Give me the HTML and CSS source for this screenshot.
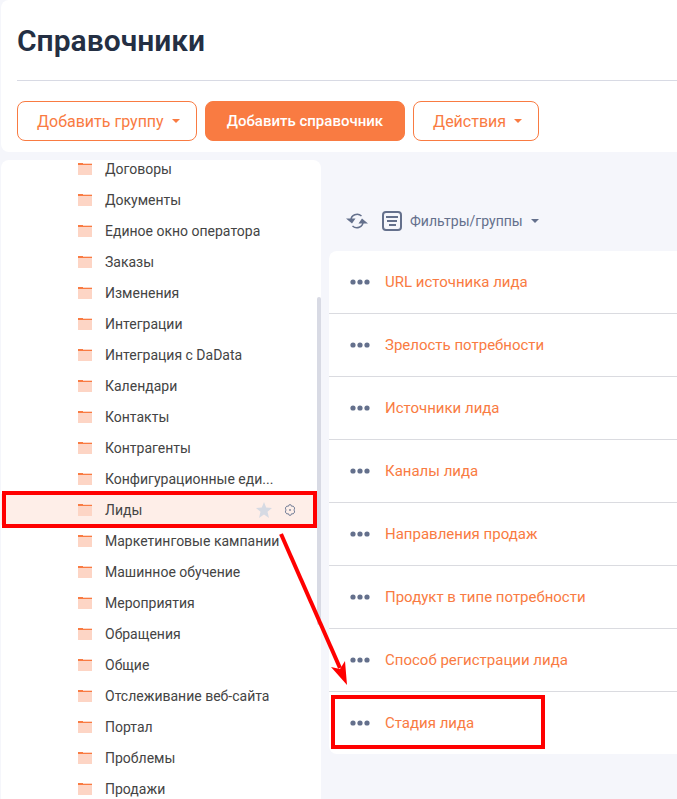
FILE: index.html
```html
<!DOCTYPE html>
<html lang="ru">
<head>
    <meta charset="UTF-8">
    <meta name="viewport" content="width=device-width, initial-scale=1.0">
    <title>Справочники</title>
    <link rel="stylesheet" href="styles.css">
</head>
<body>
    <!-- Shared icons -->
    <svg class="sprite" aria-hidden="true">
        <symbol id="folder" viewBox="0 0 14 12">
            <path fill="#fdd5c5" d="M0 0h14v12H0z"/>
            <path fill="#f97b42" d="M0 0h5v1h9v1H0z"/>
        </symbol>
        <symbol id="dots" viewBox="0 0 20 6">
            <circle cx="3" cy="3" r="2.6"/><circle cx="10" cy="3" r="2.6"/><circle cx="17" cy="3" r="2.6"/>
        </symbol>
        <symbol id="caret" viewBox="0 0 8 4">
            <path d="M0 0h8L4 4z"/>
        </symbol>
    </svg>

    <div class="page">
        <header class="header">
            <h1>Справочники</h1>
            <div class="actions">
                <button class="btn">Добавить группу <svg class="caret"><use href="#caret"/></svg></button>
                <button class="btn btn-primary">Добавить справочник</button>
                <button class="btn">Действия <svg class="caret"><use href="#caret"/></svg></button>
            </div>
        </header>

        <div class="content">
            <nav class="sidebar">
                <ul class="tree">
                    <li><a href="#"><svg class="folder"><use href="#folder"/></svg><span>Договоры</span></a></li>
                    <li><a href="#"><svg class="folder"><use href="#folder"/></svg><span>Документы</span></a></li>
                    <li><a href="#"><svg class="folder"><use href="#folder"/></svg><span>Единое окно оператора</span></a></li>
                    <li><a href="#"><svg class="folder"><use href="#folder"/></svg><span>Заказы</span></a></li>
                    <li><a href="#"><svg class="folder"><use href="#folder"/></svg><span>Изменения</span></a></li>
                    <li><a href="#"><svg class="folder"><use href="#folder"/></svg><span>Интеграции</span></a></li>
                    <li><a href="#"><svg class="folder"><use href="#folder"/></svg><span>Интеграция с DaData</span></a></li>
                    <li><a href="#"><svg class="folder"><use href="#folder"/></svg><span>Календари</span></a></li>
                    <li><a href="#"><svg class="folder"><use href="#folder"/></svg><span>Контакты</span></a></li>
                    <li><a href="#"><svg class="folder"><use href="#folder"/></svg><span>Контрагенты</span></a></li>
                    <li><a href="#"><svg class="folder"><use href="#folder"/></svg><span>Конфигурационные еди...</span></a></li>
                    <li class="active">
                        <a href="#"><svg class="folder"><use href="#folder"/></svg><span>Лиды</span></a>
                        <button class="icon-btn" aria-label="В избранное">
                            <svg class="star" viewBox="0 0 16 16"><path d="M8 0l2.200 5.600 5.800.4-4.500 3.800 1.500 6.200-5-3.400L3 16l1.500-6.200L0 6l5.800-.4z"/></svg>
                        </button>
                        <button class="icon-btn" aria-label="Настройка">
                            <svg class="gear" viewBox="0 0 12 12"><path d="M5 .8h2l.6 1.500 1.600-.2 1.500 1.900L10 6l.7 2-1.500 1.900-1.600-.2L7 11.200H5l-.6-1.500-1.600.2L1.300 8 2 6l-.7-2 1.500-1.900 1.600.2z"/><circle cx="6" cy="6" r=".6"/></svg>
                        </button>
                        <div class="mark mark-group"></div>
                    </li>
                    <li><a href="#"><svg class="folder"><use href="#folder"/></svg><span>Маркетинговые кампании</span></a></li>
                    <li><a href="#"><svg class="folder"><use href="#folder"/></svg><span>Машинное обучение</span></a></li>
                    <li><a href="#"><svg class="folder"><use href="#folder"/></svg><span>Мероприятия</span></a></li>
                    <li><a href="#"><svg class="folder"><use href="#folder"/></svg><span>Обращения</span></a></li>
                    <li><a href="#"><svg class="folder"><use href="#folder"/></svg><span>Общие</span></a></li>
                    <li><a href="#"><svg class="folder"><use href="#folder"/></svg><span>Отслеживание веб-сайта</span></a></li>
                    <li><a href="#"><svg class="folder"><use href="#folder"/></svg><span>Портал</span></a></li>
                    <li><a href="#"><svg class="folder"><use href="#folder"/></svg><span>Проблемы</span></a></li>
                    <li><a href="#"><svg class="folder"><use href="#folder"/></svg><span>Продажи</span></a></li>
                </ul>
                <div class="scroll-thumb"></div>
            </nav>

            <main class="main">
                <div class="toolbar">
                    <button class="icon-btn" aria-label="Обновить">
                        <svg class="refresh" viewBox="0 0 22 16">
                            <path class="line" d="M5 7c0-5 6.500-7.500 10.500-4M17 9c0 5-6.500 7.500-10.500 4"/>
                            <path d="M0 5.500h9.500L6 10.500zM22 10.500h-9.500L16 5.500z"/>
                        </svg>
                    </button>
                    <button class="filter-btn">
                        <svg class="filter" viewBox="0 0 20 20">
                            <rect x="1" y="1" width="18" height="18" rx="3"/>
                            <path d="M4 6h12M5 10h10M7 14h7"/>
                        </svg>
                        Фильтры/группы
                        <svg class="caret"><use href="#caret"/></svg>
                    </button>
                </div>

                <ul class="records">
                    <li><button class="icon-btn" aria-label="Меню"><svg class="dots"><use href="#dots"/></svg></button><a href="#">URL источника лида</a></li>
                    <li><button class="icon-btn" aria-label="Меню"><svg class="dots"><use href="#dots"/></svg></button><a href="#">Зрелость потребности</a></li>
                    <li><button class="icon-btn" aria-label="Меню"><svg class="dots"><use href="#dots"/></svg></button><a href="#">Источники лида</a></li>
                    <li><button class="icon-btn" aria-label="Меню"><svg class="dots"><use href="#dots"/></svg></button><a href="#">Каналы лида</a></li>
                    <li><button class="icon-btn" aria-label="Меню"><svg class="dots"><use href="#dots"/></svg></button><a href="#">Направления продаж</a></li>
                    <li><button class="icon-btn" aria-label="Меню"><svg class="dots"><use href="#dots"/></svg></button><a href="#">Продукт в типе потребности</a></li>
                    <li><button class="icon-btn" aria-label="Меню"><svg class="dots"><use href="#dots"/></svg></button><a href="#">Способ регистрации лида</a></li>
                    <li><button class="icon-btn" aria-label="Меню"><svg class="dots"><use href="#dots"/></svg></button><a href="#">Стадия лида</a><div class="mark mark-record"></div></li>
                </ul>
            </main>
        </div>

        <!-- Arrow from the group to its record -->
        <svg class="arrow" viewBox="0 0 70 156">
            <path class="line" d="M2 3l59 134"/>
            <path d="M68 154L52 136l9 2 5-8z"/>
        </svg>
    </div>
</body>
</html>
```

FILE: styles.css
```css
* {
    margin: 0;
    padding: 0;
    box-sizing: border-box;
}

body {
    font-family: Roboto, Arial, sans-serif;
    font-size: 14px;
    color: #444;
    background-color: #f5f6fb;
}

ul {
    list-style: none;
}

a {
    color: inherit;
    text-decoration: none;
}

button {
    font: inherit;
    color: inherit;
    background: none;
    border: none;
    cursor: pointer;
}

svg {
    display: block;
    flex-shrink: 0;
}

.sprite {
    position: absolute;
    width: 0;
    height: 0;
}

.page {
    position: relative;
    display: flex;
    flex-direction: column;
    gap: 8px;
    height: 100vh;
    padding-left: 1px;
    overflow: hidden;
}

/* Header */
.header {
    flex-shrink: 0;
    padding: 20px 0 11px 16px;
    background-color: white;
    border-radius: 8px 0 0 8px;
}

h1 {
    padding-bottom: 18px;
    border-bottom: 1px solid #d8dae4;
    font-size: 30px;
    font-weight: 600;
    line-height: 42px;
    color: #242f43;
}

.actions {
    display: flex;
    gap: 8px;
    padding-top: 20px;
}

.btn {
    display: flex;
    align-items: center;
    gap: 8px;
    height: 40px;
    padding: 0 16px 0 19px;
    border: 1px solid #f97b42;
    border-radius: 8px;
    font-size: 16px;
    color: #f97b42;
}

.btn-primary {
    padding: 0 21px;
    background-color: #f97b42;
    font-size: 15px;
    font-weight: 500;
    color: white;
}

.caret {
    width: 8px;
    height: 4px;
    fill: currentColor;
}

/* Groups tree */
.content {
    display: flex;
    flex: 1;
    gap: 8px;
    min-height: 0;
}

.sidebar {
    position: relative;
    flex: 0 0 320px;
    overflow: hidden;
    background-color: white;
    border-radius: 8px 8px 0 0;
}

.tree {
    margin-top: -7px;
}

.tree li {
    position: relative;
    display: flex;
    align-items: center;
    gap: 12px;
    height: 31px;
    padding: 0 25px 0 77px;
}

.tree a {
    display: flex;
    flex: 1;
    align-items: center;
    gap: 13px;
    white-space: nowrap;
}

.tree .active {
    background-color: #feeee8;
}

.folder {
    width: 14px;
    height: 12px;
}

.star {
    width: 16px;
    height: 16px;
    fill: #d6dae3;
}

.gear {
    width: 12px;
    height: 12px;
    fill: none;
    stroke: #78829a;
}

.scroll-thumb {
    position: absolute;
    top: 137px;
    right: 0;
    width: 4px;
    height: 328px;
    border-radius: 2px;
    background-color: #d8dae4;
}

/* Records */
.main {
    flex: 1;
    min-width: 0;
}

.toolbar {
    display: flex;
    align-items: center;
    gap: 14px;
    padding: 51px 0 20px 17px;
}

.toolbar,
.records {
    color: #64708c;
}

.filter-btn {
    display: flex;
    align-items: center;
    gap: 8px;
}

.refresh {
    width: 22px;
    height: 16px;
    fill: currentColor;
}

.refresh .line {
    fill: none;
    stroke: currentColor;
    stroke-width: 1.5;
}

.filter {
    width: 20px;
    height: 20px;
    fill: none;
    stroke: currentColor;
    stroke-width: 2;
}

.records {
    background-color: white;
    border-radius: 8px 0 0 8px;
}

.records li {
    position: relative;
    display: flex;
    align-items: center;
    gap: 15px;
    height: 63px;
    padding-left: 21px;
    border-bottom: 1px solid #dadbe0;
}

.records li:last-child {
    height: 62px;
    border-bottom: none;
}

.records a {
    font-size: 15px;
    color: #f97b42;
}

.dots {
    width: 20px;
    height: 6px;
    fill: currentColor;
}

/* Red callouts */
.mark {
    position: absolute;
    border: 4px solid #f00;
    pointer-events: none;
}

.mark-group {
    inset: -3px 4px -3px 1px;
}

.mark-record {
    top: 3px;
    left: 2px;
    width: 214px;
    height: 54px;
}

.arrow {
    position: absolute;
    top: 531px;
    left: 279px;
    width: 70px;
    height: 156px;
    fill: #f00;
    pointer-events: none;
}

.arrow .line {
    stroke: #f00;
    stroke-width: 4;
}
```
